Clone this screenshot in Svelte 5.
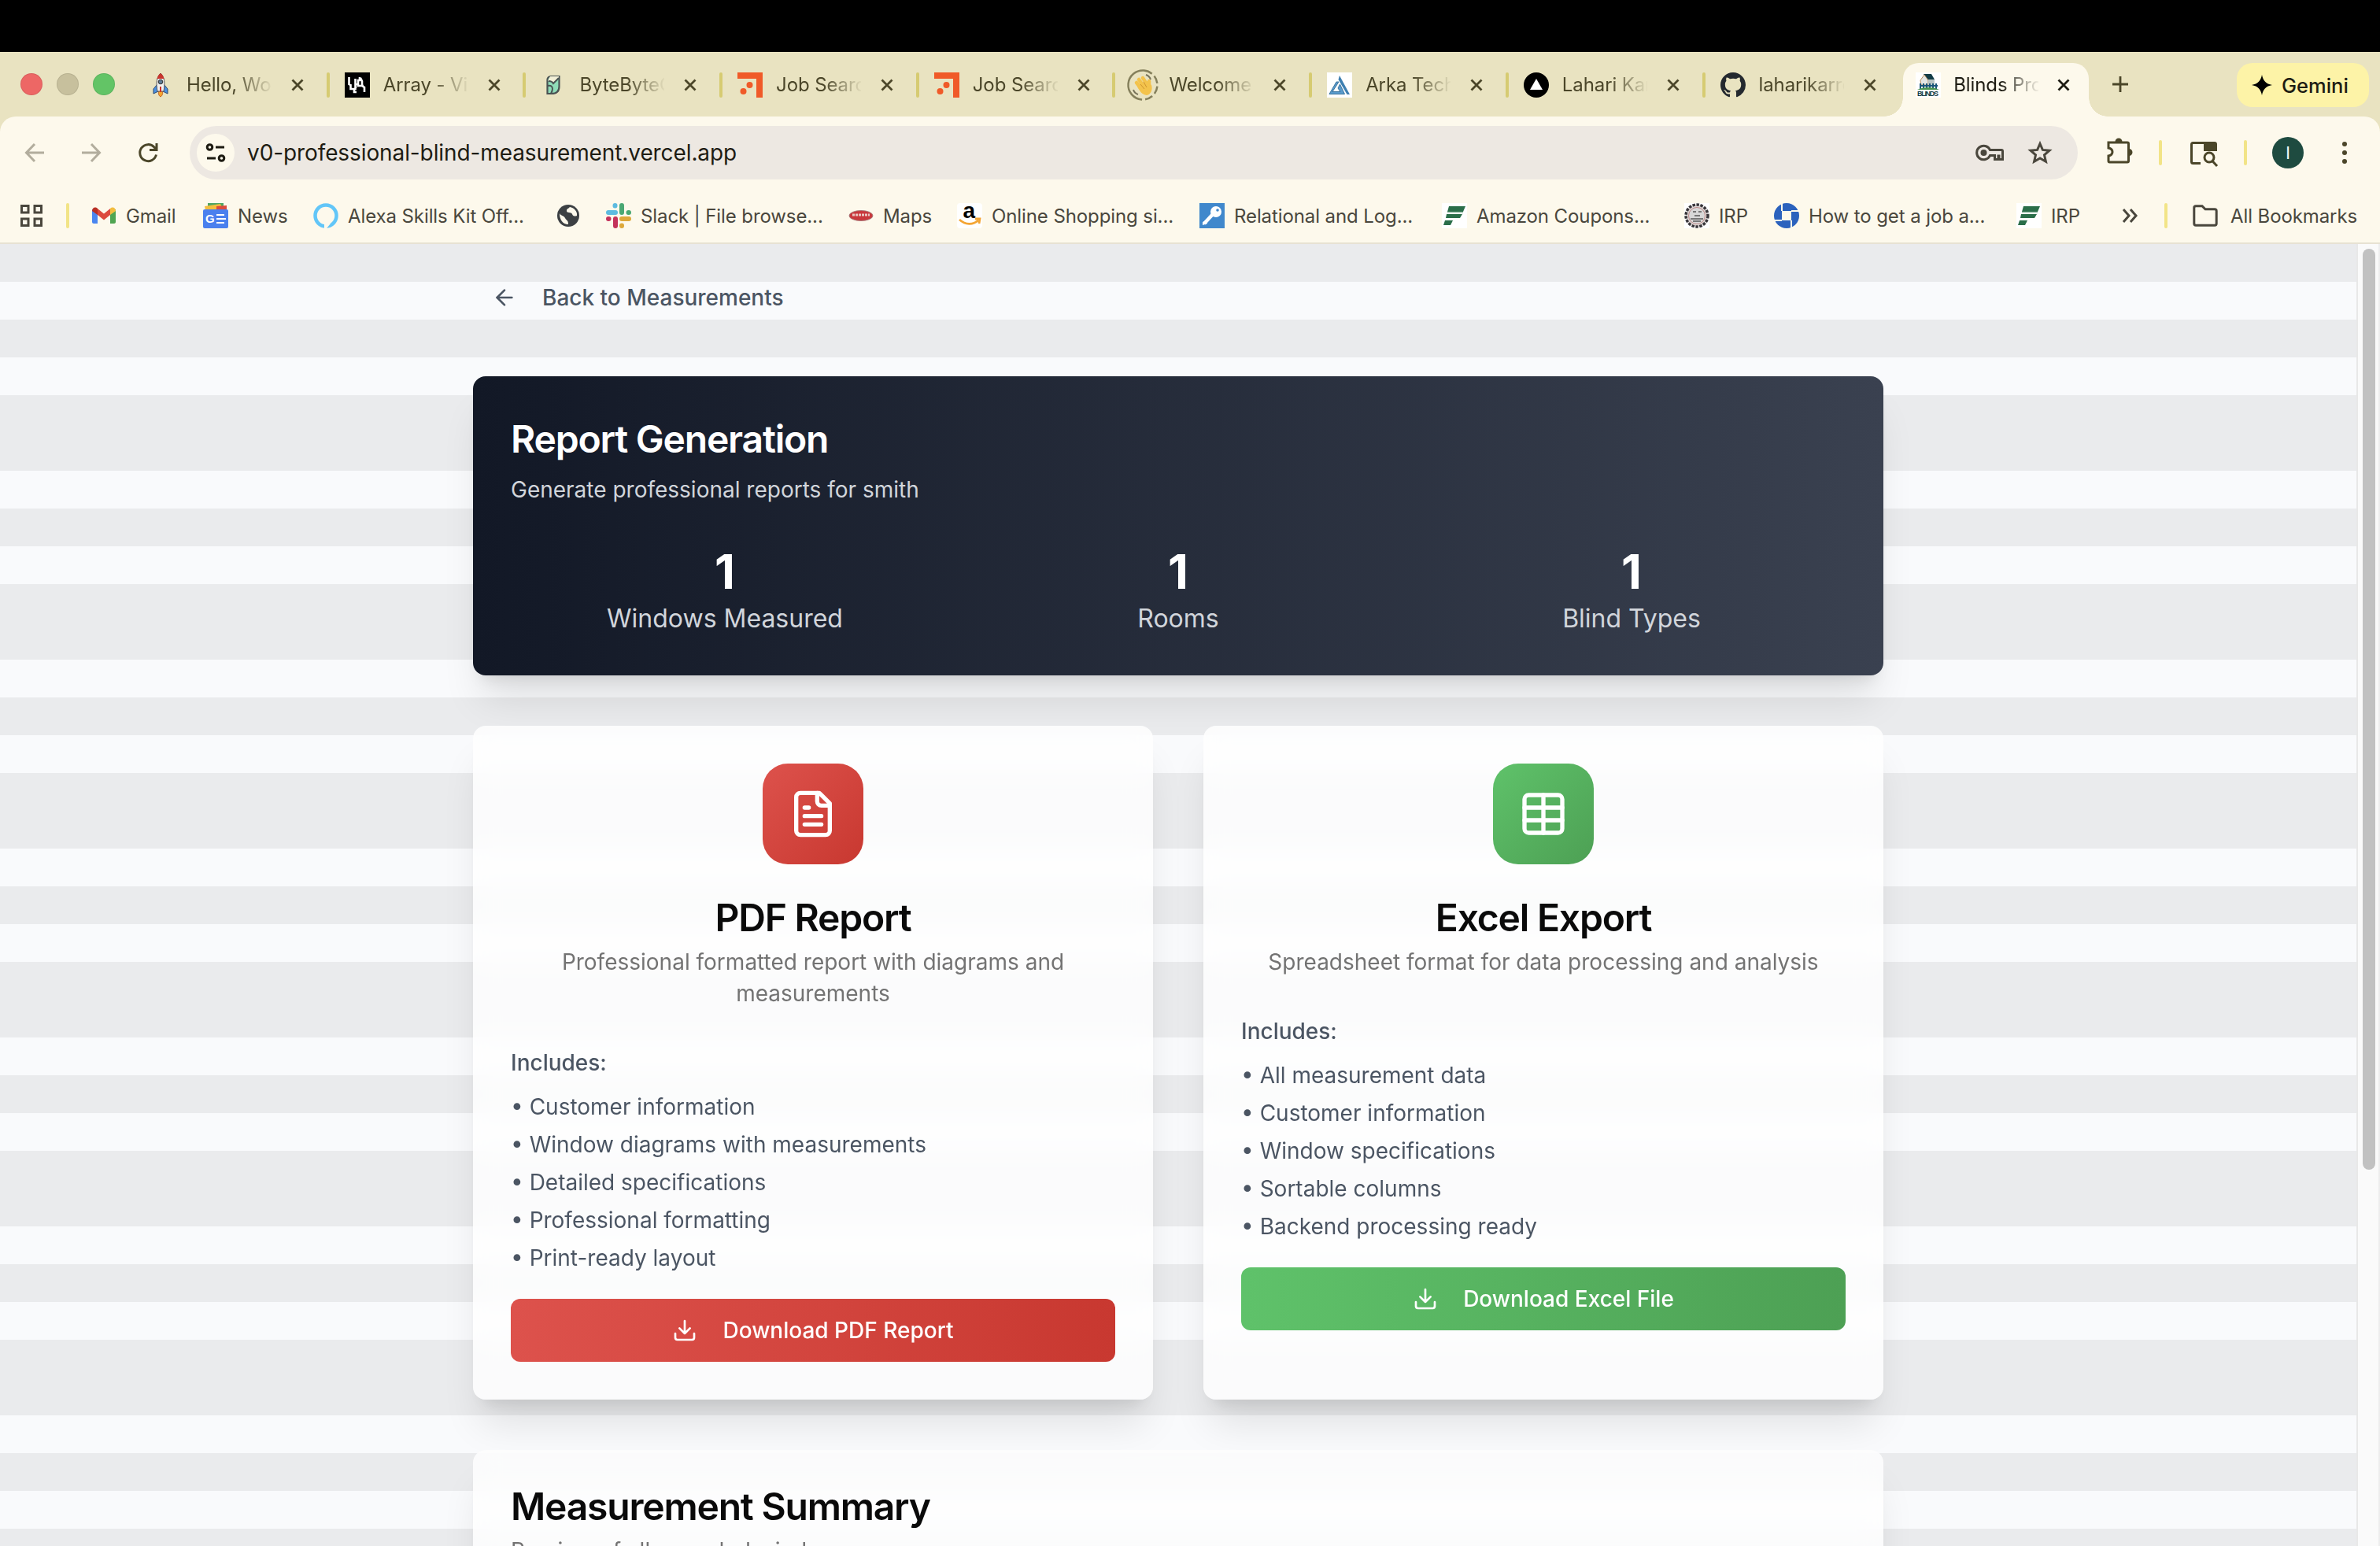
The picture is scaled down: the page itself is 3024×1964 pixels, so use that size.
<script>
  const tabs = [
    { icon: 'rocket', title: 'Hello, World' },
    { icon: 'va', title: 'Array - Visual' },
    { icon: 'bytebyte', title: 'ByteByteGo' },
    { icon: 'job', title: 'Job Search' },
    { icon: 'job', title: 'Job Search' },
    { icon: 'wave', title: 'Welcome t' },
    { icon: 'arka', title: 'Arka Techn' },
    { icon: 'vercel', title: 'Lahari Kar' },
    { icon: 'github', title: 'laharikarro' }
  ]

  // width runs from the start of one icon to the start of the next
  const bookmarks = [
    { icon: 'gmail', label: 'Gmail', width: 142 },
    { icon: 'news', label: 'News', width: 140 },
    { icon: 'alexa', label: 'Alexa Skills Kit Off...', width: 308 },
    { icon: 'globe', label: '', width: 64 },
    { icon: 'slack', label: 'Slack | File browse...', width: 308 },
    { icon: 'maps', label: 'Maps', width: 138 },
    { icon: 'amazon', label: 'Online Shopping si...', width: 308 },
    { icon: 'key', label: 'Relational and Log...', width: 308 },
    { icon: 'coupon', label: 'Amazon Coupons...', width: 308 },
    { icon: 'seal', label: 'IRP', width: 114 },
    { icon: 'chase', label: 'How to get a job a...', width: 308 },
    { icon: 'coupon', label: 'IRP', width: 122 }
  ]

  const stats = [
    { value: 1, label: 'Windows Measured' },
    { value: 1, label: 'Rooms' },
    { value: 1, label: 'Blind Types' }
  ]

  const exportsList = [
    {
      kind: 'pdf',
      title: 'PDF Report',
      description: 'Professional formatted report with diagrams and measurements',
      includes: [
        'Customer information',
        'Window diagrams with measurements',
        'Detailed specifications',
        'Professional formatting',
        'Print-ready layout'
      ],
      button: 'Download PDF Report'
    },
    {
      kind: 'excel',
      title: 'Excel Export',
      description: 'Spreadsheet format for data processing and analysis',
      includes: [
        'All measurement data',
        'Customer information',
        'Window specifications',
        'Sortable columns',
        'Backend processing ready'
      ],
      button: 'Download Excel File'
    }
  ]
</script>

{#snippet favicon(name)}
  <svg class="favicon" viewBox="0 0 32 32">
    {#if name === 'rocket'}
      <path d="M12 15l-5 6v6l6-3zM20 15l5 6v6l-6-3z" fill="#4a90e2" stroke="#27466e" />
      <path d="M16 31c-3-2-3-5-2-8h4c1 3 1 6-2 8z" fill="#f6a52c" stroke="#c0642a" />
      <path d="M16 1c5 5 6 12 4 23h-8C10 13 11 6 16 1z" fill="#f1f1f1" stroke="#555" />
      <path d="M16 1c2.500 2 4 4.500 4.500 7h-9C12 5.500 13.500 3 16 1z" fill="#c9342c" />
      <circle cx="16" cy="12" r="2.800" fill="#5d7c96" stroke="#333" />
      <path d="M16 18v7" stroke="#c9342c" stroke-width="2" />
    {:else if name === 'va'}
      <rect width="32" height="32" fill="#000" />
      <path d="M5.500 6v9l2 1v5h6V8M14 20V14M19 6v4h-2v5h-2M20 7l2 4v6l3 2v6M16 17h8M12 21v4h3" fill="none" stroke="#fff" stroke-width="2.600" />
    {:else if name === 'bytebyte'}
      <path d="M8.500 9c0-2 2-4 4-4h11v13c0 6-4 9-10 9h-5z" fill="#8fdcb8" stroke="#4a5353" stroke-width="2.200" />
      <path d="M9 11c2-1 5-1 7 3l7-7v-2H12z" fill="#f2efd6" />
      <path d="M9 17c4-1 6 1 6 4 0 2-1 4-2 6M10 11c4 0 5 1 6 3l7-7" fill="none" stroke="#4a5353" stroke-width="2" />
    {:else if name === 'job'}
      <path d="M0 0h32v32h-8V8H0z" fill="#f05a28" />
      <circle cx="15.500" cy="16" r="4" fill="#f05a28" />
      <circle cx="7.500" cy="24" r="4" fill="#f05a28" />
    {:else if name === 'arka'}
      <rect width="32" height="32" fill="#fff" />
      <path d="M16 4l13 24h-3.500L14.500 9z" fill="#3e7fb0" />
      <path d="M12 12h3L7 24.500h10L14 20l2.500-5 6 12.500H3z" fill="#5a9bcc" stroke="#3a749e" />
    {:else if name === 'vercel'}
      <circle cx="16" cy="16" r="16" fill="#000" />
      <path d="M16 8l8 14H8z" fill="#fff" />
    {:else if name === 'github'}
      <path
        transform="scale(2)"
        fill="#24292f"
        d="M8 0C3.580 0 0 3.580 0 8c0 3.540 2.290 6.530 5.470 7.590.4.070.550-.170.550-.380 0-.190-.010-.820-.010-1.490-2.010.370-2.530-.490-2.690-.940-.090-.230-.480-.940-.820-1.130-.280-.150-.680-.520-.010-.530.630-.010 1.080.580 1.230.820.720 1.210 1.870.870 2.330.660.070-.520.280-.870.510-1.070-1.780-.2-3.640-.890-3.640-3.950 0-.870.310-1.590.820-2.150-.080-.2-.360-1.020.080-2.120 0 0 .670-.210 2.200.820.640-.180 1.320-.270 2-.270s1.360.090 2 .270c1.530-1.040 2.200-.820 2.200-.820.440 1.100.160 1.920.080 2.120.510.560.820 1.270.820 2.150 0 3.070-1.870 3.750-3.650 3.950.290.250.540.730.540 1.480 0 1.070-.010 1.930-.010 2.200 0 .210.150.460.550.380A8.010 8.010 0 0 0 16 8c0-4.420-3.580-8-8-8z"
      />
    {:else if name === 'wave'}
      <circle cx="16" cy="16" r="18.500" fill="none" stroke="#85805c" stroke-width="2.500" stroke-dasharray="11 4 10 4 10 4 10 4 60 0" transform="rotate(-85 16 16)" />
      <path d="M8 13l7 9M11 9l8 11M16 7l7 11M24 21V11" stroke="#f3c34c" stroke-width="4.500" stroke-linecap="round" />
      <path d="M9 18l12-7 6 5c2 6-1 12-6 13-6-1-9-5-12-11z" fill="#f3c34c" />
      <path d="M13 15l5 6M17 12l4 7" stroke="#cf9530" stroke-width="1" />
      <path d="M20 3c3 1 5 3 6 6M4 22c1 3 3 5 6 6" fill="none" stroke="#77735a" stroke-width="2" />
    {:else if name === 'blinds'}
      <rect width="32" height="32" fill="#fff" />
      <path d="M10 2h10l4 7h-9z" fill="#123c46" />
      <path d="M6 10l5-7 5 7v6H7z" fill="#e4e7e4" stroke="#b98f63" />
      <path d="M16 9h8v8h-8z" fill="#b9c5c4" />
      <path d="M6 14v7M10 14v7M14 14v7M18 14v7M22 14v7M26 14v7M5 17h23" stroke="#1b5678" stroke-width="2" />
      <path d="M2 22c8-4 20-4 28 0z" fill="#4b9651" />
      <text x="2" y="30" class="logo-text" font-size="9" fill="#123c46" textLength="27">BLINDS</text>
    {:else if name === 'gmail'}
      <path d="M1 8h7v18H3c-1 0-2-1-2-2z" fill="#4a86f0" />
      <path d="M24 8h7v16c0 1-1 2-2 2h-5z" fill="#50a551" />
      <path d="M8 7l8 6.500L24 7v8l-8 6.500L8 15z" fill="#dc4a3d" />
      <path d="M1 10c0-4 4-6 7-3v8l-7-5z" fill="#b93025" />
      <path d="M31 10c0-4-4-6-7-3v8l7-5z" fill="#f3bd3e" />
    {:else if name === 'news'}
      <path d="M6 0h20v8H6z" fill="#50a561" />
      <path d="M2 4l20-3 4 8H3z" fill="#f3bd3e" />
      <path d="M17 4l13-1v6H17z" fill="#dc4a3d" />
      <rect y="8" width="32" height="24" rx="2" fill="#4a80ee" />
      <text x="3" y="25" class="logo-text" font-size="15" fill="#fff">G</text>
      <path d="M17 15h10M17 20h12M17 25h10" stroke="#fff" stroke-width="2.200" />
    {:else if name === 'alexa'}
      <circle cx="16" cy="16" r="13.500" fill="none" stroke="#62c6f8" stroke-width="4.500" />
      <path d="M14 32V26l8 0-5 6z" fill="#fdf9ec" />
    {:else if name === 'globe'}
      <circle cx="16" cy="16" r="14" fill="#3c4043" />
      <path d="M5 13c2 4 5 2 7 6s4 2 4 8c-7 0-11-6-11-14zM18 5c-3 3-4 2-4 5s6 1 7 4 4 3 6 2c1-6-4-10-9-11z" fill="#fdf9ec" />
    {:else if name === 'slack'}
      <g stroke-width="6" stroke-linecap="round">
        <path d="M3 12h9M11.500 3v.500" stroke="#5dbbe0" />
        <path d="M20 3v9M28.500 12h.5" stroke="#4aa873" />
        <path d="M20 20h9M20 28.500v.500" stroke="#dda83a" />
        <path d="M12 20v9M3 20h.500" stroke="#c4325b" />
      </g>
    {:else if name === 'maps'}
      <ellipse cx="16" cy="16" rx="15" ry="6.500" fill="#c9383c" stroke="#a77" />
      <path d="M5 15h22" stroke="#e9c9c4" stroke-width="3" stroke-dasharray="3 1" />
    {:else if name === 'amazon'}
      <rect width="32" height="32" rx="4" fill="#fff" />
      <text x="7.500" y="19" class="logo-text" font-size="28" fill="#000">a</text>
      <path d="M3 21c8 7 17 7 24 1M23 20h6l-1 6" fill="none" stroke="#f4a533" stroke-width="2.800" />
    {:else if name === 'key'}
      <rect width="32" height="32" fill="#4088cc" />
      <circle cx="21" cy="11" r="7" fill="#fff" />
      <path d="M18 13L6 26" stroke="#fff" stroke-width="4.500" fill="none" />
      <path d="M4 28v-4l5-2 1 4z" fill="#fff" />
      <circle cx="23" cy="9" r="1.800" fill="#4088cc" />
    {:else if name === 'coupon'}
      <rect width="32" height="32" fill="#fff" />
      <path d="M9 4h21l-3 7H7zM6 14h20l-3 5H5zM4 22h10l-3 6H2z" fill="#2a6e49" />
      <path d="M7 12h20" stroke="#9fc2ae" stroke-width="1.500" />
    {:else if name === 'seal'}
      <rect width="32" height="32" fill="#fff" />
      <circle cx="16" cy="16" r="14" fill="#ded7d5" stroke="#39363a" stroke-width="3.500" stroke-dasharray="3.500 1.500" />
      <circle cx="16" cy="16" r="10.500" fill="#d8d8d8" stroke="#b88" />
      <path d="M11 11h4M18 11h4M13 16h7M8 20h16M11 23h10" stroke="#777" stroke-width="2" />
    {:else if name === 'chase'}
      <circle cx="16" cy="16" r="16" fill="#2b62bd" />
      <path d="M10 10h12v12H10z" fill="#fdf9ec" />
      <path d="M10 0v10M22 10h10M22 32V22M0 22h10" stroke="#fdf9ec" stroke-width="2" fill="none" />
    {/if}
  </svg>
{/snippet}

{#snippet closeIcon()}
  <svg class="close" viewBox="0 0 16 16"><path d="M1.500 1.500l13 13M14.500 1.500l-13 13" /></svg>
{/snippet}

<div class="screen">
  <div class="menubar"></div>

  <header class="tabstrip">
    <div class="lights">
      <span class="light red"></span>
      <span class="light idle"></span>
      <span class="light green"></span>
    </div>
    {#each tabs as tab, i}
      <div class="tab">
        {#if i > 0}<span class="tab-divider"></span>{/if}
        {@render favicon(tab.icon)}
        <span class="tab-title">{tab.title}</span>
        {@render closeIcon()}
      </div>
    {/each}
    <div class="tab active">
      {@render favicon('blinds')}
      <span class="tab-title">Blinds Pro</span>
      {@render closeIcon()}
    </div>
    <svg class="new-tab" viewBox="0 0 20 20"><path d="M10 0v20M0 10h20" /></svg>
    <div class="gemini">
      <svg viewBox="0 0 26 26"><path d="M13 0c1.500 7.500 5 11.500 13 13-8 1.500-11.500 5.500-13 13C11.500 18.500 8 14.500 0 13 8 11.500 11.500 7.500 13 0z" /></svg>
      Gemini
    </div>
  </header>

  <div class="toolbar-wrap">
    <div class="toolbar">
      <svg class="nav dim" viewBox="0 0 24 24"><path d="M24 12H1.500M12 1L1.500 12 12 23" /></svg>
      <svg class="nav dim" viewBox="0 0 24 24"><path d="M0 12h22.500M12 1l10.500 11L12 23" /></svg>
      <svg class="nav" viewBox="0 0 24 24"><path d="M22.500 14.500A10.500 10.500 0 1 1 20 5l2.500 3M23 0v8.500h-9" /></svg>
      <div class="omnibox">
        <span class="site-info">
          <svg viewBox="0 0 24 24"><circle cx="4.500" cy="5" r="3.300" /><path d="M12 5h11M1 19h11" /><circle cx="19.500" cy="19" r="3.300" /></svg>
        </span>
        <span class="url">v0-professional-blind-measurement.vercel.app</span>
        <svg class="key-icon" viewBox="0 0 36 22">
          <path d="M18.500 7.500A8.800 8.800 0 1 0 18.500 14.500h6v5h4.500v-4.500h1v4.500H34.500V9c0-1-.5-1.500-1.500-1.500z" />
          <circle cx="10.500" cy="11" r="4" class="solid" />
        </svg>
        <svg class="star-icon" viewBox="0 0 30 30"><path d="M15 3.500l3.400 7.900 8.600.8-6.500 5.700 1.900 8.400-7.400-4.400-7.400 4.400 1.900-8.400L3 12.200l8.600-.8z" /></svg>
      </div>
      <svg class="ext" viewBox="0 0 36 36">
        <path d="M4 8h24c1 0 1.500.5 1.500 1.500v22c0 1-.5 1.500-1.500 1.500H5.500c-1 0-1.500-.5-1.500-1.500V25c3-.5 5-2.500 5-5s-2-4.500-5-5z" />
        <path class="solid" d="M12.500 7a4.500 4.500 0 0 1 9 0zM30 16a4.500 4.500 0 0 1 0 9z" />
      </svg>
      <span class="bar-divider"></span>
      <svg class="tab-search" viewBox="0 0 36 32">
        <path d="M14 27.500H4.500c-1.200 0-2-.8-2-2v-22c0-1.200.8-2 2-2h26" />
        <path class="solid" d="M18 0h14c1.700 0 3 1.300 3 3v9H18z" />
        <circle cx="25" cy="20" r="6" /><path d="M29 24.500l6 6.500" />
      </svg>
      <span class="bar-divider"></span>
      <span class="avatar">I</span>
      <span class="dots"><i></i><i></i><i></i></span>
    </div>

    <nav class="bookmarks">
      <svg class="apps" viewBox="0 0 28 28"><path d="M1.500 1.500h8.500v8.500H1.500zM18 1.500h8.500v8.500H18zM1.500 18h8.500v8.500H1.500zM18 18h8.500v8.500H18z" /></svg>
      <span class="bar-divider first"></span>
      {#each bookmarks as item}
        <span class="bookmark" style="width: {item.width}px">
          {@render favicon(item.icon)}
          {item.label}
        </span>
      {/each}
      <svg class="more" viewBox="0 0 20 18"><path d="M2 1l7 8-7 8M11 1l7 8-7 8" /></svg>
      <span class="bar-divider"></span>
      <svg class="folder" viewBox="0 0 32 28"><path d="M1.800 4c0-1.300.9-2.200 2.200-2.200h8l4 4h12c1.300 0 2.200.9 2.200 2.200v16c0 1.300-.9 2.200-2.200 2.200H4c-1.300 0-2.200-.9-2.200-2.200z" /></svg>
      <span class="all">All Bookmarks</span>
    </nav>
  </div>

  <div class="viewport">
    <main>
      <button class="back">
        <svg class="lucide" viewBox="0 0 24 24"><path d="m12 19-7-7 7-7" /><path d="M19 12H5" /></svg>
        Back to Measurements
      </button>

      <section class="hero">
        <h1>Report Generation</h1>
        <p>Generate professional reports for smith</p>
        <div class="stats">
          {#each stats as stat}
            <div class="stat">
              <div class="stat-value">{stat.value}</div>
              <div class="stat-label">{stat.label}</div>
            </div>
          {/each}
        </div>
      </section>

      <div class="cards">
        {#each exportsList as item}
          <section class="card {item.kind}">
            <div class="card-header">
              <div class="card-icon">
                <svg class="lucide" viewBox="0 0 24 24">
                  {#if item.kind === 'pdf'}
                    <path d="M15 2H6a2 2 0 0 0-2 2v16a2 2 0 0 0 2 2h12a2 2 0 0 0 2-2V7Z" />
                    <path d="M14 2v4a2 2 0 0 0 2 2h4" />
                    <path d="M10 9H8M16 13H8M16 17H8" />
                  {:else}
                    <rect x="3" y="3" width="18" height="18" rx="2" />
                    <path d="M12 3v18M3 9h18M3 15h18" />
                  {/if}
                </svg>
              </div>
              <h2>{item.title}</h2>
              <p>{item.description}</p>
            </div>
            <div class="includes">
              <strong>Includes:</strong>
              <ul>
                {#each item.includes as line}
                  <li>• {line}</li>
                {/each}
              </ul>
            </div>
            <button class="download">
              <svg class="lucide" viewBox="0 0 24 24">
                <path d="M21 15v4a2 2 0 0 1-2 2H5a2 2 0 0 1-2-2v-4" />
                <path d="m7 10 5 5 5-5M12 15V3" />
              </svg>
              {item.button}
            </button>
          </section>
        {/each}
      </div>

      <section class="card summary">
        <h2>Measurement Summary</h2>
        <p>Preview of all recorded windows</p>
      </section>
    </main>
    <div class="scrollbar"><div class="thumb"></div></div>
  </div>
</div>

<style>
  :global(body) {
    overflow: hidden;
  }

  .screen {
    width: 3024px;
    height: 1964px;
    display: flex;
    flex-direction: column;
    overflow: hidden;
    font-family: Inter, 'Liberation Sans', sans-serif;
    color: #4a473d;
  }

  .screen * {
    box-sizing: border-box;
  }

  svg {
    flex: none;
    overflow: visible;
  }

  h1, h2, p, ul {
    margin: 0;
    padding: 0;
  }

  .menubar {
    height: 66px;
    flex: none;
    background: #000;
  }

  /* tabs */
  .tabstrip {
    height: 82px;
    flex: none;
    display: flex;
    align-items: center;
    background: #e9e3c1;
    padding-left: 26px;
  }

  .lights {
    display: flex;
    gap: 18px;
    width: 140px;
  }

  .light {
    width: 28px;
    height: 28px;
    border-radius: 50%;
    border: 1px solid rgba(0, 0, 0, 0.08);
  }

  .light.red { background: #ed6765; }
  .light.idle { background: #c7c09d; }
  .light.green { background: #63c466; }

  .favicon {
    width: 32px;
    height: 32px;
  }

  .logo-text {
    font-family: 'Liberation Sans', sans-serif;
    font-weight: 700;
  }

  .tab {
    position: relative;
    display: flex;
    align-items: center;
    width: 249.700px;
    flex: none;
    padding: 2px 0 0 22px;
    color: #4b4629;
  }

  .tab-divider {
    position: absolute;
    left: -1px;
    top: 2px;
    width: 4px;
    height: 32px;
    border-radius: 2px;
    background: #d6cb72;
  }

  .tab-title {
    width: 108px;
    margin: 0 25px 0 17px;
    overflow: hidden;
    white-space: nowrap;
    font-size: 24px;
    line-height: 32px;
    letter-spacing: -0.1px;
    mask-image: linear-gradient(to right, #000 56%, transparent 102%);
  }

  .close {
    width: 16px;
    height: 16px;
    stroke: currentColor;
    stroke-width: 2.800;
  }

  .tab.active {
    width: 236px;
    height: 68px;
    margin: 14px 0 0 5px;
    padding: 0 0 12px 16px;
    border-radius: 20px 20px 0 0;
    background: #fdf9ec;
    color: #1e1c13;
  }

  .tab.active::before,
  .tab.active::after {
    content: '';
    position: absolute;
    bottom: 0;
    width: 24px;
    height: 24px;
  }

  .tab.active::before {
    left: -24px;
    background: radial-gradient(circle at 0 0, transparent 23.5px, #fdf9ec 24px);
  }

  .tab.active::after {
    right: -24px;
    background: radial-gradient(circle at 100% 0, transparent 23.5px, #fdf9ec 24px);
  }

  .tab.active .tab-title {
    margin: 0 24px 0 16px;
  }

  .new-tab {
    width: 20px;
    height: 20px;
    margin-left: 30px;
    stroke: #4b4629;
    stroke-width: 2.800;
  }

  .gemini {
    display: flex;
    align-items: center;
    gap: 12px;
    width: 168px;
    height: 56px;
    margin: 2px 14px 0 auto;
    padding-left: 19px;
    border-radius: 20px;
    background: #fdf3a7;
    color: #1e1c13;
    font-size: 25.500px;
    font-weight: 500;
  }

  .gemini svg {
    width: 26px;
    height: 26px;
  }

  /* toolbar */
  .toolbar-wrap {
    height: 162px;
    flex: none;
    background: #e9e3c1;
    display: flex;
    flex-direction: column;
  }

  .toolbar {
    height: 92px;
    display: flex;
    align-items: center;
    padding-left: 32px;
    background: #fdf9ec;
    border-radius: 20px 20px 0 0;
    color: #4b4629;
  }

  .toolbar svg,
  .bookmarks > svg {
    fill: none;
    stroke: currentColor;
    stroke-width: 3;
  }

  .toolbar svg .solid {
    fill: currentColor;
    stroke: none;
  }

  .nav {
    width: 24px;
    height: 24px;
    margin-right: 48px;
  }

  .nav.dim {
    color: #b2ad9d;
  }

  .omnibox {
    display: flex;
    align-items: center;
    width: 2399px;
    height: 68px;
    margin: 0 36px 0 -7px;
    padding: 0 33px 0 9px;
    border-radius: 34px;
    background: #ede8e2;
    color: #4a473d;
  }

  .site-info {
    display: flex;
    align-items: center;
    justify-content: center;
    width: 48px;
    height: 48px;
    border-radius: 50%;
    background: #fdf9ec;
    color: #1e1c13;
  }

  .site-info svg {
    width: 24px;
    height: 24px;
  }

  .url {
    flex: 1;
    margin-left: 16px;
    font-size: 28px;
    letter-spacing: -0.1px;
    color: #1e1c13;
  }

  .key-icon {
    width: 36px;
    height: 22px;
    margin-right: 31px;
  }

  .star-icon {
    width: 30px;
    height: 30px;
  }

  .toolbar svg.ext {
    width: 36px;
    height: 36px;
    margin: -6px 0 0 -1px;
  }

  .bar-divider {
    flex: none;
    width: 4px;
    height: 32px;
    border-radius: 2px;
    background: #f2e487;
  }

  .ext + .bar-divider {
    margin: 0 35px 0 32px;
  }

  .tab-search {
    width: 36px;
    height: 32px;
    margin: 4px 33px 0 0;
  }

  .avatar {
    display: flex;
    align-items: center;
    justify-content: center;
    width: 40px;
    height: 40px;
    margin: 0 49px 0 32px;
    border-radius: 50%;
    background: #1e4b40;
    color: #fff;
    font-size: 21px;
  }

  .dots {
    display: flex;
    flex-direction: column;
    gap: 5px;
  }

  .dots i {
    width: 6px;
    height: 6px;
    border-radius: 50%;
    background: #4b4629;
  }

  .bookmarks {
    height: 70px;
    display: flex;
    align-items: center;
    padding: 0 0 0 26px;
    background: #fdf9ec;
    border-bottom: 2px solid #e7e2d3;
    font-size: 24px;
    letter-spacing: -0.1px;
  }

  .apps {
    width: 28px;
    height: 28px;
    margin-right: 30px;
  }

  .bar-divider.first {
    margin-right: 28px;
  }

  .bookmark {
    display: flex;
    align-items: center;
    gap: 12px;
    flex: none;
    white-space: nowrap;
  }

  .more {
    width: 20px;
    height: 18px;
    margin: 0 34px 0 12px;
  }

  .folder {
    width: 32px;
    height: 28px;
    margin: 0 16px 0 32px;
  }

  .all {
    white-space: nowrap;
  }

  /* page */
  .viewport {
    flex: 1;
    min-height: 0;
    display: flex;
    background: repeating-linear-gradient(
      to bottom,
      #eaebed 0 48px,
      #f9fafc 48px 96px,
      #eaebed 96px 144px,
      #f9fafc 144px 192px,
      #eaebed 192px 240px
    );
  }

  main {
    width: 1792px;
    margin: 0 auto;
    padding-top: 32px;
    display: flex;
    flex-direction: column;
    color: #4b5563;
    font-size: 28px;
    line-height: 40px;
  }

  button {
    display: flex;
    align-items: center;
    gap: 32px;
    border: 0;
    font: 500 28px/40px Inter, 'Liberation Sans', sans-serif;
  }

  .lucide {
    width: 32px;
    height: 32px;
    fill: none;
    stroke: currentColor;
    stroke-width: 2;
    stroke-linecap: round;
    stroke-linejoin: round;
  }

  .back {
    height: 72px;
    flex: none;
    align-self: flex-start;
    margin-bottom: 64px;
    padding: 0 24px;
    background: none;
    color: #4b5563;
  }

  .hero,
  .card {
    border-radius: 16px;
    padding: 48px;
    flex: none;
    box-shadow: 0 40px 50px -10px rgba(0, 0, 0, 0.1), 0 16px 20px -12px rgba(0, 0, 0, 0.1);
  }

  .hero {
    height: 380px;
    background: linear-gradient(to right, #121826, #3a4150);
    color: #d1d5db;
  }

  .hero h1 {
    margin-bottom: 12px;
    font-size: 48px;
    line-height: 64px;
    font-weight: 600;
    letter-spacing: -1.2px;
    color: #fff;
  }

  .stats {
    display: grid;
    grid-template-columns: repeat(3, 1fr);
    gap: 32px;
    margin-top: 48px;
    text-align: center;
  }

  .stat-value {
    font-size: 60px;
    line-height: 72px;
    font-weight: 700;
    color: #fff;
  }

  .stat-label {
    font-size: 32px;
    line-height: 48px;
  }

  .cards {
    display: grid;
    grid-template-columns: 1fr 1fr;
    gap: 64px;
    margin: 64px 0;
  }

  .card {
    background: rgba(255, 255, 255, 0.8);
    backdrop-filter: blur(16px);
  }

  .card-header {
    text-align: center;
    margin-bottom: 48px;
  }

  .card-icon {
    display: flex;
    align-items: center;
    justify-content: center;
    width: 128px;
    height: 128px;
    margin: 0 auto 44px;
    border-radius: 32px;
    color: #fff;
  }

  .card-icon .lucide {
    width: 64px;
    height: 64px;
  }

  .pdf .card-icon { background: linear-gradient(to bottom right, #dd524c, #c83830); }
  .excel .card-icon { background: linear-gradient(to bottom right, #5fc26a, #4da054); }
  .pdf .download { background: linear-gradient(to right, #dd524c, #c83830); }
  .excel .download { background: linear-gradient(to right, #5fc26a, #4da054); }

  .card h2 {
    margin-bottom: 12px;
    font-size: 48px;
    line-height: 48px;
    font-weight: 600;
    letter-spacing: -1.2px;
    color: #0a0a0a;
  }

  .card p {
    color: #737373;
  }

  .includes strong {
    display: block;
    font-weight: 500;
    margin-bottom: 16px;
  }

  ul {
    list-style: none;
    display: flex;
    flex-direction: column;
    gap: 8px;
  }

  .download {
    width: 100%;
    height: 80px;
    margin-top: 32px;
    justify-content: center;
    border-radius: 12px;
    color: #fff;
  }

  .summary {
    height: 400px;
  }

  .scrollbar {
    width: 30px;
    padding: 6px 4px 0 6px;
    background: #fafafa;
    border-left: 2px solid #e8e8e8;
    border-right: 2px solid #ededed;
  }

  .thumb {
    width: 16px;
    height: 1170px;
    border-radius: 8px;
    background: #c1c1c1;
  }
</style>
